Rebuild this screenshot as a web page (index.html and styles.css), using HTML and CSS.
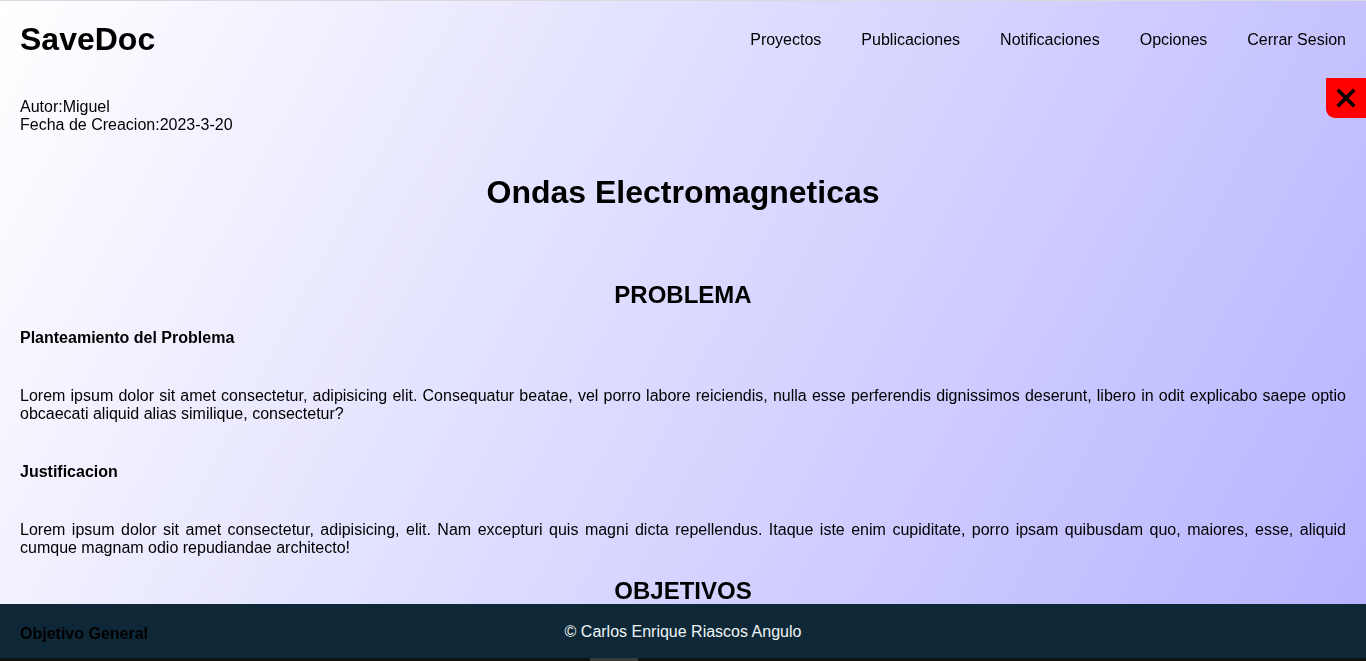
FILE: index.html
```html
<!DOCTYPE html>
<html lang="es">
<head>
<meta charset="utf-8">
<title>SaveDoc</title>
<link rel="stylesheet" href="styles.css">
</head>
<body>
<div class="page">
  <header class="topbar">
    <div class="logo">SaveDoc</div>
    <nav class="nav">
      <a href="#">Proyectos</a>
      <a href="#">Publicaciones</a>
      <a href="#">Notificaciones</a>
      <a href="#">Opciones</a>
      <a href="#">Cerrar Sesion</a>
    </nav>
  </header>

  <button class="close" aria-label="Cerrar">
    <svg width="20" height="20" viewBox="0 0 20 20"><path d="M3 3 L17 17 M17 3 L3 17" stroke="#000" stroke-width="3.6" stroke-linecap="square" fill="none"/></svg>
  </button>

  <main class="doc">
    <div class="meta">
      <div>Autor:Miguel</div>
      <div>Fecha de Creacion:2023-3-20</div>
    </div>
    <h1 class="title">Ondas Electromagneticas</h1>

    <h2 class="section">PROBLEMA</h2>
    <h3 class="sub first">Planteamiento del Problema</h3>
    <p class="text">Lorem ipsum dolor sit amet consectetur, adipisicing elit. Consequatur beatae, vel porro labore reiciendis, nulla esse perferendis dignissimos deserunt, libero in odit explicabo saepe optio obcaecati aliquid alias similique, consectetur?</p>
    <h3 class="sub">Justificacion</h3>
    <p class="text">Lorem ipsum dolor sit amet consectetur, adipisicing, elit. Nam excepturi quis magni dicta repellendus. Itaque iste enim cupiditate, porro ipsam quibusdam quo, maiores, esse, aliquid cumque magnam odio repudiandae architecto!</p>

    <h2 class="section s2">OBJETIVOS</h2>
    <h3 class="sub first">Objetivo General</h3>
    <p class="text">Lorem ipsum dolor sit amet consectetur adipisicing elit. Quasi, voluptatum, laborum, dolores molestiae cumque quaerat iste.</p>
  </main>
</div>

<footer class="footer">© Carlos Enrique Riascos Angulo</footer>
<div class="bottombar"><span class="thumb"></span></div>
</body>
</html>
```

FILE: styles.css
```css
* { box-sizing: border-box; }

html {
  background: linear-gradient(118deg, #ffffff 0%, #b3b0ff 100%);
  min-height: 100%;
}

body {
  margin: 0;
  font-family: "Liberation Sans", Arial, sans-serif;
  font-size: 16px;
  line-height: normal;
  color: #000;
  border-top: 1px solid #d9d9de;
  min-height: 661px;
}

.page {
  position: relative;
  z-index: 2;
}

.topbar {
  height: 77px;
  display: flex;
  align-items: center;
  justify-content: space-between;
  padding: 0 20px;
}

.logo {
  font-size: 32px;
  font-weight: bold;
}

.nav {
  display: flex;
  gap: 40px;
}

.nav a {
  color: #000;
  text-decoration: none;
}

.close {
  position: absolute;
  top: 77px;
  right: 0;
  width: 40px;
  height: 40px;
  border: 0;
  padding: 0;
  background: #ff0000;
  border-radius: 0 0 0 9px;
  display: flex;
  align-items: center;
  justify-content: center;
}

.close svg { display: block; }

.doc {
  padding: 0 20px 80px;
}

.meta {
  margin-top: 20px;
}

.title {
  margin: 40px 0 0;
  text-align: center;
  font-size: 32px;
}

.section {
  margin: 70px 0 0;
  text-align: center;
  font-size: 24px;
}

.section.s2 { margin-top: 20px; }

.sub {
  margin: 40px 0 0;
  font-size: 16px;
}

.sub.first { margin-top: 20px; }

.text {
  margin: 40px 0 0;
  text-align: justify;
}

.footer {
  position: fixed;
  left: 0;
  right: 0;
  bottom: 3px;
  height: 54px;
  padding-top: 2px;
  background: #0f2837;
  color: #eef4f6;
  display: flex;
  align-items: center;
  justify-content: center;
  z-index: 1;
}

.bottombar {
  position: fixed;
  left: 0;
  right: 0;
  bottom: 0;
  height: 3px;
  background: #111111;
  z-index: 3;
}

.thumb {
  position: absolute;
  left: 590px;
  width: 48px;
  top: 0;
  bottom: 0;
  background: #3a3a3a;
}
```
